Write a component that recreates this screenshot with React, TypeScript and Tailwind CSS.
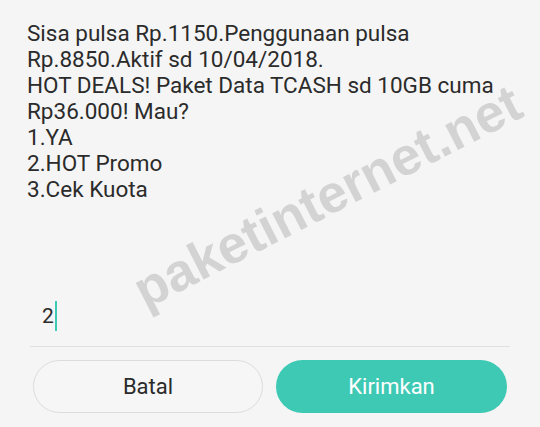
const lines = [
  "Sisa pulsa Rp.1150.Penggunaan pulsa",
  "Rp.8850.Aktif sd 10/04/2018.",
  "HOT DEALS! Paket Data TCASH sd 10GB cuma",
  "Rp36.000! Mau?",
  "1.YA",
  "2.HOT Promo",
  "3.Cek Kuota",
];

export default function App() {
  return (
    <div className="relative flex h-[427px] w-[540px] flex-col overflow-hidden bg-[#f5f5f5] font-['Roboto',sans-serif] text-[#2b2b2b]">
      {/* watermark */}
      <div className="pointer-events-none absolute left-[327px] top-[196px] -translate-x-1/2 -translate-y-1/2 -rotate-[27deg] whitespace-nowrap font-['Liberation_Sans',sans-serif] text-[53px] font-bold leading-none text-[#d3d3d3]">
        paketinternet.net
      </div>

      <div className="relative whitespace-nowrap pl-[27px] pt-[20px] text-[22.5px] leading-[26px]">
        {lines.map((l, i) => (
          <div key={i}>{l}</div>
        ))}
      </div>

      <div className="relative mt-auto flex pb-[15px] pl-[42px]">
        <span className="text-[21px] leading-[30px]">2</span>
        <span className="ml-px h-[30px] w-[2px] bg-[#3ec9b5]" />
      </div>
      <div className="relative mx-[30px] h-px bg-[#e0e0e0]" />

      <div className="relative flex gap-[13px] px-[33px] pb-[14px] pt-[13px]">
        <button className="flex h-[53px] w-[230px] items-center justify-center rounded-full border border-[#dcdcdc] bg-[#f6f6f6] text-[22px] text-[#2b2b2b]">
          Batal
        </button>
        <button className="flex h-[53px] w-[231px] items-center justify-center rounded-full bg-[#3ec9b5] text-[22px] text-white">
          Kirimkan
        </button>
      </div>
    </div>
  );
}
